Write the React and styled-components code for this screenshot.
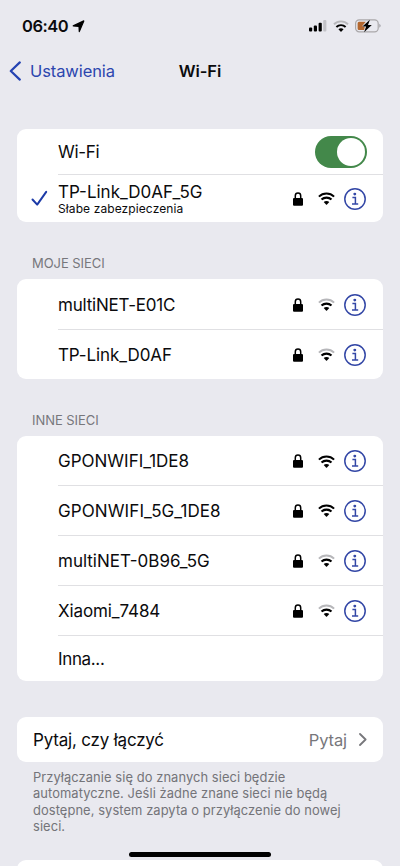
import styled, { createGlobalStyle } from 'styled-components';

const GlobalStyle = createGlobalStyle`
  * {
    box-sizing: border-box;
  }

  body {
    margin: 0;
    background: #e9e9ef;
    font-family: Inter, 'Liberation Sans', sans-serif;
    color: #0b0b0d;
  }
`;

const Screen = styled.main`
  position: relative;
  width: 400px;
  height: 866px;
  overflow: hidden;
  background: #e9e9ef;
  display: flex;
  flex-direction: column;
`;

const StatusBar = styled.header`
  height: 50px;
  padding: 2px 19px 0 22px;
  display: flex;
  align-items: center;
  justify-content: space-between;
  flex-shrink: 0;
`;

const Clock = styled.div`
  display: flex;
  align-items: center;
  gap: 4px;
  font-size: 16.5px;
  font-weight: 600;
  letter-spacing: -0.5px;
`;

const StatusIcons = styled.div`
  display: flex;
  align-items: center;
  gap: 6px;
`;

const NavBar = styled.nav`
  height: 42px;
  padding: 0 9px;
  display: grid;
  grid-template-columns: 1fr auto 1fr;
  align-items: center;
  flex-shrink: 0;
`;

const BackLink = styled.a`
  display: flex;
  align-items: center;
  gap: 9px;
  color: #2c46ae;
  font-size: 16.5px;
  letter-spacing: -0.1px;
  cursor: pointer;
`;

const Title = styled.h1`
  margin: 0;
  font-size: 16.5px;
  font-weight: 600;
  letter-spacing: -0.1px;
`;

const Card = styled.section`
  margin: ${({ $top }) => $top || 0}px 17px 0;
  border-radius: 9px;
  background: #fff;
  flex-shrink: 0;
  overflow: hidden;
`;

const Row = styled.div`
  display: flex;
  height: ${({ $height }) => $height || 50}px;
`;

const Mark = styled.div`
  width: 41px;
  padding-left: 14px;
  display: flex;
  align-items: center;
  flex-shrink: 0;
`;

const RowBody = styled.div`
  flex: 1;
  padding-right: 17px;
  display: flex;
  align-items: center;
  justify-content: space-between;
  border-top: 1px solid ${({ $divided }) => ($divided ? '#e0e0e3' : 'transparent')};
`;

const Label = styled.div`
  font-size: 17px;
  line-height: 20px;
  letter-spacing: ${({ $spacing }) => $spacing ?? 0}px;
  white-space: nowrap;
`;

const Caption = styled.div`
  font-size: 12px;
  line-height: 14px;
  letter-spacing: 0.1px;
`;

const RowIcons = styled.div`
  display: flex;
  align-items: center;

  svg + svg {
    margin-left: 15px;
  }

  svg:last-child {
    margin-left: 9px;
  }
`;

const Switch = styled.button`
  width: 52px;
  height: 32px;
  margin: 0 -1px 0 0;
  padding: 2px;
  border: 0;
  border-radius: 16px;
  background: #43884a;
  display: flex;
  justify-content: flex-end;
`;

const Knob = styled.span`
  width: 28px;
  height: 28px;
  border-radius: 50%;
  background: #fff;
`;

const SectionTitle = styled.h2`
  height: 57px;
  margin: 0;
  padding: 33px 32px 0;
  font-size: 13px;
  font-weight: 400;
  line-height: 16px;
  letter-spacing: -0.05px;
  color: #77777c;
  flex-shrink: 0;
`;

const SettingRow = styled(Row)`
  padding: 0 16px;
  align-items: center;
  justify-content: space-between;
`;

const Value = styled.div`
  display: flex;
  align-items: center;
  gap: 12px;
  color: #77777b;
  font-size: 16.5px;
  letter-spacing: -0.1px;
`;

const Footnote = styled.p`
  margin: 8px 33px 0;
  height: 90px;
  font-size: 12.9px;
  line-height: 16.4px;
  letter-spacing: 0.08px;
  color: #747479;
  white-space: nowrap;
  flex-shrink: 0;
`;

const HomeIndicator = styled.div`
  position: absolute;
  left: 129px;
  bottom: 9px;
  width: 142px;
  height: 5px;
  border-radius: 3px;
  background: #000;
`;

const WifiIcon = ({ weak, width = 17, height = 13 }) => (
  <svg width={width} height={height} viewBox='0 0 17 13' fill='none'>
    <path d='M.9 4.6C5.1 .4 11.9 .4 16.1 4.6' stroke={weak ? '#b7b7ba' : '#000'} strokeWidth='2' />
    <path d='M3.5 7.6C6.3 4.9 10.7 4.9 13.5 7.6' stroke='#000' strokeWidth='2.1' />
    <path d='M5.7 10.1C7.3 8.7 9.7 8.7 11.3 10.1L9 12.5Q8.5 12.9 8 12.5Z' fill='#000' />
  </svg>
);

const LockIcon = () => (
  <svg width='10' height='14' viewBox='0 0 10 14' fill='none'>
    <path d='M2.3 7V3.8C2.3 .2 7.7 .2 7.7 3.8V7' stroke='#000' strokeWidth='1.5' />
    <rect y='6' width='10' height='7.8' rx='1.1' fill='#000' />
  </svg>
);

const InfoIcon = () => (
  <svg width='22' height='22' viewBox='0 0 22 22' fill='none' stroke='#3347a6'>
    <circle cx='11' cy='11' r='10.2' strokeWidth='1.5' />
    <circle cx='10.8' cy='6.1' r='1.45' fill='#3347a6' stroke='none' />
    <path d='M8.4 9.4H11.4V16M8 16.1H14.2' strokeWidth='1.5' />
  </svg>
);

const CheckIcon = () => (
  <svg width='17' height='17' viewBox='0 0 17 17' fill='none'>
    <path d='M1.5 9.5L6.2 14.6L15.2 1.8' stroke='#1d3ba8' strokeWidth='2' strokeLinecap='round' strokeLinejoin='round' />
  </svg>
);

const LocationIcon = () => (
  <svg width='13' height='13' viewBox='0 0 13 13'>
    <path
      d='M11.8 .9L7.3 11.6L7 6.4L1.2 5.9Z'
      fill='#000'
      stroke='#000'
      strokeWidth='1.2'
      strokeLinejoin='round'
    />
  </svg>
);

const SignalIcon = () => (
  <svg width='18' height='12' viewBox='0 0 18 12'>
    <rect x='0' y='7.5' width='3.2' height='4' rx='1' fill='#000' />
    <rect x='4.8' y='5.4' width='3.2' height='6.1' rx='1' fill='#000' />
    <rect x='9.6' y='2.7' width='3.2' height='8.8' rx='1' fill='#000' />
    <rect x='14.2' y='0' width='3.2' height='11.5' rx='1' fill='#c2c2c7' />
  </svg>
);

const BatteryIcon = () => (
  <svg width='26' height='14' viewBox='0 0 26 14' fill='none'>
    <rect x='.6' y='.8' width='22.6' height='12' rx='3.6' stroke='#aaa8aa' strokeWidth='1.2' />
    <path d='M24.4 4.8Q26.8 6.8 24.4 8.8Z' fill='#99999d' />
    <path d='M4 2.7H10.8L7.5 6.8Q7 7.8 8.4 7.8H9.8L9.2 10.9H4Q2.6 10.9 2.6 9.4V4.2Q2.6 2.7 4 2.7Z' fill='#b3672f' />
    <path d='M14.9 .8L7.4 7.4H11.1L9.1 13.2L16.8 5.9H13Z' fill='#000' />
  </svg>
);

const BackIcon = () => (
  <svg width='12' height='20' viewBox='0 0 12 20' fill='none'>
    <path d='M10.8 1.4L1.8 10L10.8 18.6' stroke='#2443b2' strokeWidth='2.2' strokeLinecap='round' strokeLinejoin='round' />
  </svg>
);

const ChevronIcon = () => (
  <svg width='8' height='13' viewBox='0 0 8 13' fill='none'>
    <path d='M1 1L6.6 6.5L1 12' stroke='#77777b' strokeWidth='1.8' strokeLinecap='round' strokeLinejoin='round' />
  </svg>
);

const myNetworks = [
  { name: 'multiNET-E01C', weak: true, spacing: -0.2 },
  { name: 'TP-Link_D0AF', weak: true, spacing: -0.1 },
];

const otherNetworks = [
  { name: 'GPONWIFI_1DE8' },
  { name: 'GPONWIFI_5G_1DE8', spacing: 0.1 },
  { name: 'multiNET-0B96_5G', weak: true },
  { name: 'Xiaomi_7484', weak: true, spacing: -0.1 },
];

const NetworkRow = ({ name, weak, caption, connected, divided, height, spacing }) => (
  <Row $height={height}>
    <Mark>{connected && <CheckIcon />}</Mark>
    <RowBody $divided={divided}>
      <div>
        <Label $spacing={spacing}>{name}</Label>
        {caption && <Caption>{caption}</Caption>}
      </div>
      <RowIcons>
        <LockIcon />
        <WifiIcon weak={weak} />
        <InfoIcon />
      </RowIcons>
    </RowBody>
  </Row>
);

const App = () => {
  return (
    <Screen>
      <GlobalStyle />
      <StatusBar>
        <Clock>
          06:40
          <LocationIcon />
        </Clock>
        <StatusIcons>
          <SignalIcon />
          <WifiIcon weak width={16} height={12} />
          <BatteryIcon />
        </StatusIcons>
      </StatusBar>
      <NavBar>
        <BackLink>
          <BackIcon />
          Ustawienia
        </BackLink>
        <Title>Wi-Fi</Title>
      </NavBar>

      <Card $top={37}>
        <Row $height={45}>
          <Mark />
          <RowBody>
            <Label $spacing={-0.3}>Wi-Fi</Label>
            <Switch aria-label='Wi-Fi'>
              <Knob />
            </Switch>
          </RowBody>
        </Row>
        <NetworkRow name='TP-Link_D0AF_5G' caption='Słabe zabezpieczenia' height={48} connected divided />
      </Card>

      <SectionTitle>MOJE SIECI</SectionTitle>
      <Card>
        {myNetworks.map((network, i) => (
          <NetworkRow key={network.name} {...network} divided={i > 0} />
        ))}
      </Card>

      <SectionTitle>INNE SIECI</SectionTitle>
      <Card>
        {otherNetworks.map((network, i) => (
          <NetworkRow key={network.name} {...network} divided={i > 0} height={i > 0 ? 50 : 49} />
        ))}
        <Row $height={46}>
          <Mark />
          <RowBody $divided>
            <Label $spacing={-0.35}>Inna...</Label>
          </RowBody>
        </Row>
      </Card>

      <Card $top={36}>
        <SettingRow $height={45}>
          <Label $spacing={-0.2}>Pytaj, czy łączyć</Label>
          <Value>
            Pytaj
            <ChevronIcon />
          </Value>
        </SettingRow>
      </Card>
      <Footnote>
        Przyłączanie się do znanych sieci będzie<br />
        automatyczne. Jeśli żadne znane sieci nie będą<br />
        dostępne, system zapyta o przyłączenie do nowej<br />
        sieci.
      </Footnote>
      <Card>
        <Row />
      </Card>
      <HomeIndicator />
    </Screen>
  );
};

export default App;
